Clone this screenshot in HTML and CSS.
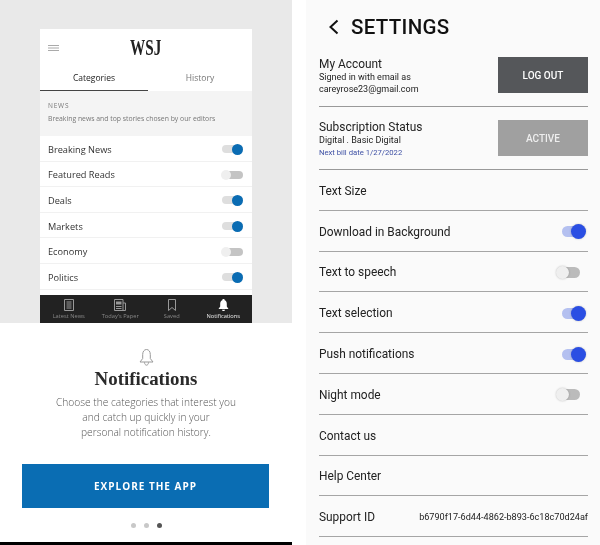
FILE: index.html
```html
<!DOCTYPE html>
<html lang="en">
<head>
    <meta charset="UTF-8">
    <title>WSJ Notifications and Settings</title>
    <link rel="stylesheet" href="styles.css">
</head>
<body>
    <div class="page">
        <div class="intro">
            <div class="hero">
                <div class="phone">
                    <div class="phone-header">
                        <div class="logo-row">
                            <svg class="menu-icon" width="11" height="6" viewBox="0 0 11 6"><path d="M0 .5h11M0 3h11M0 5.5h11" stroke="#aaa" fill="none"/></svg>
                            <span class="logo">WSJ</span>
                        </div>
                        <div class="tabs">
                            <div class="tab active">Categories</div>
                            <div class="tab">History</div>
                        </div>
                    </div>
                    <div class="news-block">
                        <div class="news-title">NEWS</div>
                        <div class="news-text">Breaking news and top stories chosen by our editors</div>
                    </div>
                    <div class="cat-row"><span>Breaking News</span><span class="cat-switch on"></span></div>
                    <div class="cat-row"><span>Featured Reads</span><span class="cat-switch"></span></div>
                    <div class="cat-row"><span>Deals</span><span class="cat-switch on"></span></div>
                    <div class="cat-row"><span>Markets</span><span class="cat-switch on"></span></div>
                    <div class="cat-row"><span>Economy</span><span class="cat-switch"></span></div>
                    <div class="cat-row"><span>Politics</span><span class="cat-switch on"></span></div>
                    <div class="tabbar">
                        <div class="tabbar-item">
                            <svg width="10" height="12" viewBox="0 0 10 12"><path d="M.5.5h9v11h-9zM2.500 3h5M2.500 5h5M2.500 7h5M2.500 9h5" stroke="#999" fill="none"/></svg>
                            <span>Latest News</span>
                        </div>
                        <div class="tabbar-item">
                            <svg width="12" height="12" viewBox="0 0 12 12"><path d="M.5.5h8.500v11h-8.500zM9 4h2.500v7.500H9" stroke="#999" fill="none"/><path d="M2 2.500h5.500v3H2z" fill="#999"/><path d="M2 7.500h5.500M2 9.500h5.500" stroke="#999"/></svg>
                            <span>Today's Paper</span>
                        </div>
                        <div class="tabbar-item">
                            <svg width="8" height="12" viewBox="0 0 8 12"><path d="M.5.5h7v11L4 8.500l-3.500 3z" stroke="#999" fill="none"/></svg>
                            <span>Saved</span>
                        </div>
                        <div class="tabbar-item current">
                            <svg width="11" height="12" viewBox="0 0 11 12"><path d="M5.500 0C6.300 0 6.700.6 6.700 1.200 8.300 1.800 8.800 3.200 8.800 5v2.500L10.500 10H.5l1.700-2.500V5c0-1.800.5-3.200 2.100-3.800C4.300.6 4.700 0 5.500 0zM4 10.700h3C7 11.500 6.300 12 5.500 12S4 11.500 4 10.700z" fill="#fff"/></svg>
                            <span>Notifications</span>
                        </div>
                    </div>
                </div>
            </div>
            <div class="pitch">
                <svg class="pitch-bell" width="15" height="17" viewBox="0 0 15 17"><path d="M7.500.5C10 .5 11.300 2.800 11.300 5.500v4l2.700 3.500H1l2.700-3.500v-4C3.700 2.800 5 .5 7.500.5zM5.500 13.300c0 1.800 1 2.900 2 2.900s2-1.100 2-2.900" stroke="#999" fill="none"/></svg>
                <h1 class="pitch-title">Notifications</h1>
                <p class="pitch-text">Choose the categories that interest you<br>and catch up quickly in your<br>personal notification history.</p>
                <button class="explore-btn">EXPLORE THE APP</button>
                <div class="dots">
                    <span class="dot"></span>
                    <span class="dot"></span>
                    <span class="dot current"></span>
                </div>
            </div>
            <div class="bottom-bar"></div>
        </div>

        <div class="settings">
            <div class="settings-header">
                <svg width="11" height="16" viewBox="0 0 11 16"><path d="M9.500 1.500L2.500 8l7 6.500" stroke="#111" stroke-width="2" fill="none"/></svg>
                <h2>SETTINGS</h2>
            </div>
            <div class="account-row first">
                <div>
                    <div class="row-label">My Account</div>
                    <div class="row-small">Signed in with email as<br>careyrose23@gmail.com</div>
                </div>
                <div class="action-box dark">LOG OUT</div>
            </div>
            <div class="account-row">
                <div>
                    <div class="row-label">Subscription Status</div>
                    <div class="row-small">Digital . Basic Digital</div>
                    <div class="row-bill">Next bill date 1/27/2022</div>
                </div>
                <div class="action-box grey">ACTIVE</div>
            </div>
            <div class="set-row">Text Size</div>
            <div class="set-row">Download in Background<span class="set-switch on"></span></div>
            <div class="set-row">Text to speech<span class="set-switch"></span></div>
            <div class="set-row">Text selection<span class="set-switch on"></span></div>
            <div class="set-row">Push notifications<span class="set-switch on"></span></div>
            <div class="set-row">Night mode<span class="set-switch"></span></div>
            <div class="set-row">Contact us</div>
            <div class="set-row">Help Center</div>
            <div class="set-row">Support ID<span class="support-id">b6790f17-6d44-4862-b893-6c18c70d24af</span></div>
        </div>
    </div>
</body>
</html>
```

FILE: styles.css
```css
* {
    margin: 0;
    padding: 0;
    box-sizing: border-box;
}

body {
    background-color: white;
    overflow: hidden;
}

.page {
    display: flex;
    width: 600px;
    height: 545px;
    will-change: transform;
}

.intro {
    width: 292px;
    flex-shrink: 0;
    display: flex;
    flex-direction: column;
    font-family: "Open Sans", sans-serif;
}

.hero {
    height: 323px;
    padding-top: 29px;
    background-color: #e9e9e9;
    flex-shrink: 0;
}

.phone {
    width: 212px;
    height: 294px;
    margin-left: 40px;
    background-color: white;
    display: flex;
    flex-direction: column;
}

.logo-row {
    height: 36px;
    position: relative;
    display: flex;
    align-items: center;
    justify-content: center;
}

.menu-icon {
    position: absolute;
    left: 8px;
    top: 16px;
}

.logo {
    font-family: "Liberation Serif", serif;
    font-weight: bold;
    font-size: 23px;
    line-height: 23px;
    color: #222;
    display: inline-block;
    transform: scaleX(0.66);
    margin-top: 1px;
}

.tabs {
    display: flex;
    height: 26px;
}

.tab {
    flex: 1;
    text-align: center;
    font-size: 8.500px;
    line-height: 25px;
    color: #777;
}

.tab.active {
    flex: 0 0 108px;
    color: #222;
    border-bottom: 1px solid #444;
}

.news-block {
    height: 45px;
    background-color: #f4f4f4;
    padding: 10px 8px 0;
    color: #777;
}

.news-title {
    font-size: 6.500px;
    letter-spacing: 0.8px;
    line-height: 10px;
}

.news-text {
    font-size: 6.850px;
    line-height: 15px;
    white-space: nowrap;
}

.cat-row {
    height: 25.600px;
    flex-shrink: 0;
    padding: 2px 9px 0 8px;
    display: flex;
    align-items: center;
    justify-content: space-between;
    font-size: 9.200px;
    color: #333;
    border-bottom: 1px solid #f1f1f1;
}

.cat-switch {
    width: 21px;
    height: 8px;
    border-radius: 4px;
    background-color: #c4c4c4;
    position: relative;
}

.cat-switch::after {
    content: '';
    position: absolute;
    left: -1px;
    top: -1px;
    width: 10px;
    height: 10px;
    border-radius: 50%;
    background-color: #efefef;
}

.cat-switch.on {
    background-color: #dedede;
}

.cat-switch.on::after {
    left: 10px;
    top: -1.500px;
    width: 11px;
    height: 11px;
    background-color: #0a6cb3;
}

.tabbar {
    height: 28px;
    margin-top: auto;
    background-color: #222;
    display: flex;
    padding: 4px 3px 0;
    flex-shrink: 0;
}

.tabbar-item {
    flex: 1;
    display: flex;
    flex-direction: column;
    align-items: center;
    gap: 2px;
    font-size: 5.700px;
    line-height: 7px;
    color: #888;
    white-space: nowrap;
}

.tabbar-item.current {
    color: #eee;
}

.pitch {
    flex: 1;
    display: flex;
    flex-direction: column;
    align-items: center;
    padding-top: 26px;
}

.pitch-title {
    font-family: "Liberation Serif", serif;
    font-weight: bold;
    font-size: 18.900px;
    line-height: 24px;
    color: #2a2a2a;
    margin-top: 1px;
}

.pitch-text {
    text-align: center;
    font-size: 10.200px;
    font-weight: 300;
    line-height: 15px;
    color: #555;
    margin-top: 4px;
}

.explore-btn {
    width: 247px;
    height: 44px;
    margin-top: 24px;
    margin-right: 1px;
    flex-shrink: 0;
    border: none;
    background-color: #0a6db3;
    color: white;
    font-family: "Open Sans", sans-serif;
    font-weight: 700;
    font-size: 10px;
    letter-spacing: 1px;
}

.dots {
    display: flex;
    gap: 8px;
    margin-top: 15px;
}

.dot {
    width: 5px;
    height: 5px;
    border-radius: 50%;
    background-color: #c8c8c8;
}

.dot.current {
    background-color: #555;
}

.bottom-bar {
    height: 3px;
    background-color: black;
    flex-shrink: 0;
}

.settings {
    width: 294px;
    margin-left: 14px;
    padding: 0 12px 0 13px;
    background-color: #fafafa;
    font-family: Roboto, sans-serif;
    color: #222;
    flex-shrink: 0;
}

.settings-header {
    height: 52px;
    display: flex;
    align-items: center;
    gap: 12px;
    padding-left: 9px;
    padding-top: 1px;
}

.settings-header h2 {
    font-size: 20.500px;
    font-weight: 500;
    color: #111;
    letter-spacing: 0.3px;
}

.account-row {
    height: 63px;
    display: flex;
    justify-content: space-between;
    align-items: flex-start;
    padding-top: 13px;
    border-bottom: 1px solid #999;
}

.account-row.first {
    height: 55px;
    padding-top: 5px;
}

.row-label {
    font-size: 11.900px;
    line-height: 15px;
}

.row-small {
    font-size: 9px;
    line-height: 11.500px;
}

.row-bill {
    font-size: 7.700px;
    line-height: 12px;
    color: #3f51a5;
}

.action-box {
    width: 90px;
    height: 36px;
    display: flex;
    align-items: center;
    justify-content: center;
    font-size: 10px;
    font-weight: 500;
    color: white;
}

.action-box.dark {
    background-color: #55575a;
}

.action-box.grey {
    background-color: #a0a0a0;
    color: #eee;
}

.set-row {
    height: 40.800px;
    display: flex;
    align-items: center;
    justify-content: space-between;
    font-size: 11.900px;
    border-bottom: 1px solid #a5a5a5;
    padding-top: 2px;
}

.support-id {
    font-size: 9.100px;
}

.set-switch {
    width: 22px;
    height: 11px;
    margin-right: 8px;
    border-radius: 6px;
    background-color: #bbb;
    position: relative;
}

.set-switch::after {
    content: '';
    position: absolute;
    left: -2px;
    top: -1px;
    width: 13px;
    height: 13px;
    border-radius: 50%;
    background-color: #efefef;
    box-shadow: 0 0 2px rgba(0,0,0,0.25);
}

.set-switch.on {
    width: 20px;
    margin-right: 6px;
    background-color: #b4c0f0;
}

.set-switch.on::after {
    left: 9px;
    top: -2px;
    width: 15px;
    height: 15px;
    background-color: #2a4ee3;
}
```
